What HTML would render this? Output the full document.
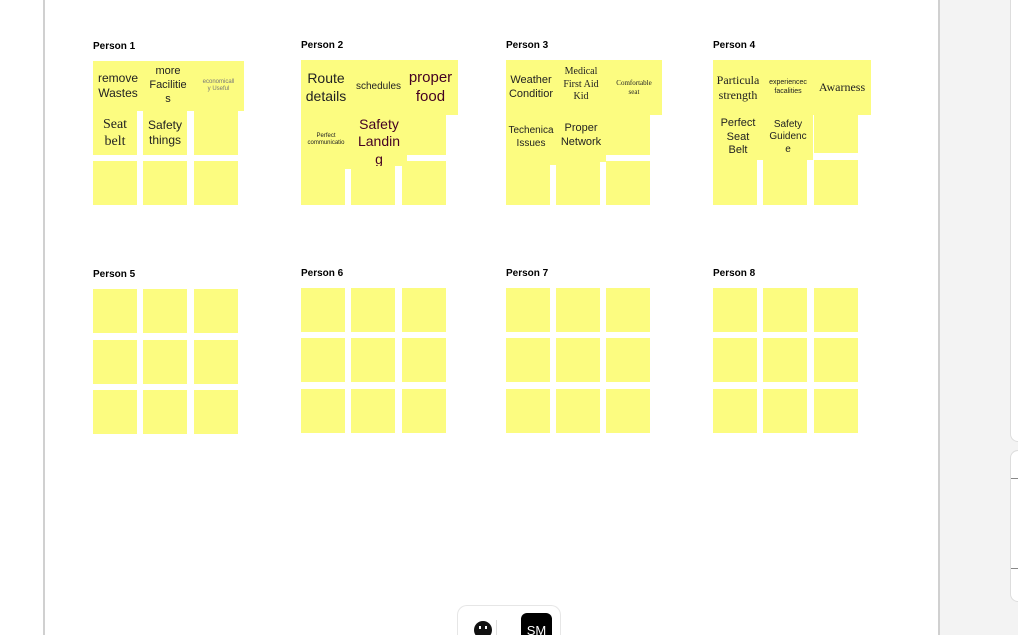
<!DOCTYPE html>
<html style="overflow:hidden;height:635px"><head><meta charset="utf-8"><style>
html,body{margin:0;width:1018px;height:635px;overflow:hidden}
body{background:#fff;position:relative;font-family:"Liberation Sans",sans-serif}
.n{position:absolute;background:#fcfc80;display:flex;align-items:center;justify-content:center;text-align:center;color:#222;line-height:1.25;overflow:hidden;box-sizing:border-box;white-space:nowrap}
.t{position:absolute;font-weight:bold;font-size:10px;color:#000}
.s{font-family:"Liberation Serif",serif}
</style></head><body>
<div style="position:absolute;left:43px;top:0;width:2px;height:635px;background:#d0d0d0"></div>
<div style="position:absolute;left:938px;top:0;width:80px;height:635px;background:#f3f3f3;border-left:2px solid #d0d0d0"></div>
<div style="position:absolute;left:1010px;top:-10px;width:20px;height:450px;background:#fff;border:1px solid #ddd;border-radius:8px"></div>
<div style="position:absolute;left:1010px;top:450px;width:20px;height:150px;background:#fff;border:1px solid #ddd;border-radius:8px"></div>
<div style="position:absolute;left:1011px;top:478px;width:8px;height:1px;background:#888"></div>
<div style="position:absolute;left:1011px;top:568px;width:8px;height:1px;background:#888"></div>

<div class="t" style="left:93px;top:41px">Person 1</div>
<div class="t" style="left:301px;top:40px">Person 2</div>
<div class="t" style="left:506px;top:40px">Person 3</div>
<div class="t" style="left:713px;top:40px">Person 4</div>
<div class="t" style="left:93px;top:269px">Person 5</div>
<div class="t" style="left:301px;top:268px">Person 6</div>
<div class="t" style="left:506px;top:268px">Person 7</div>
<div class="t" style="left:713px;top:268px">Person 8</div>

<!-- Person 1 -->
<div class="n" style="left:93px;top:61px;width:50px;height:50px;font-size:12px">remove<br>Wastes</div>
<div class="n" style="left:143px;top:61px;width:50px;height:50px;font-size:11px">more<br>Facilitie<br>s</div>
<div class="n" style="left:193px;top:61px;width:51px;height:50px;font-size:6px;color:#777">economicall<br>y Useful</div>
<div class="n s" style="left:93px;top:111px;width:44px;height:44px;font-size:14px">Seat<br>belt</div>
<div class="n" style="left:143px;top:111px;width:44px;height:44px;font-size:12px">Safety<br>things</div>
<div class="n" style="left:194px;top:111px;width:44px;height:44px"></div>
<div class="n" style="left:93px;top:161px;width:44px;height:44px"></div>
<div class="n" style="left:143px;top:161px;width:44px;height:44px"></div>
<div class="n" style="left:194px;top:161px;width:44px;height:44px"></div>

<!-- Person 2 -->
<div class="n" style="left:301px;top:60px;width:50px;height:55px;font-size:14px">Route<br>details</div>
<div class="n" style="left:351px;top:60px;width:55px;height:55px;font-size:10px">schedules</div>
<div class="n" style="left:403px;top:60px;width:55px;height:55px;font-size:15px;color:#402">proper<br>food</div>
<div class="n" style="left:301px;top:111px;width:50px;height:58px;font-size:6px">Perfect<br>communicatio</div>
<div class="n" style="left:402px;top:111px;width:44px;height:44px"></div>
<div class="n" style="left:351px;top:110px;width:56px;height:56px;font-size:14px;color:#402;padding-top:8px">Safety<br>Landin<br>g</div>
<div class="n" style="left:301px;top:161px;width:44px;height:44px"></div>
<div class="n" style="left:351px;top:166px;width:44px;height:39px"></div>
<div class="n" style="left:402px;top:161px;width:44px;height:44px"></div>

<!-- Person 3 -->
<div class="n" style="left:506px;top:60px;width:50px;height:55px;font-size:11px">Weather<br>Conditior</div>
<div class="n s" style="left:556px;top:60px;width:50px;height:50px;font-size:10px">Medical<br>First Aid<br>Kid</div>
<div class="n s" style="left:606px;top:60px;width:56px;height:55px;font-size:7px">Comfortable<br>seat</div>
<div class="n" style="left:506px;top:110px;width:50px;height:55px;font-size:10px">Techenica<br>Issues</div>
<div class="n" style="left:556px;top:110px;width:50px;height:52px;font-size:11px">Proper<br>Network</div>
<div class="n" style="left:606px;top:115px;width:44px;height:40px"></div>
<div class="n" style="left:506px;top:165px;width:44px;height:40px"></div>
<div class="n" style="left:556px;top:162px;width:44px;height:43px"></div>
<div class="n" style="left:606px;top:161px;width:44px;height:44px"></div>

<!-- Person 4 -->
<div class="n s" style="left:713px;top:60px;width:50px;height:55px;font-size:12px">Particula<br>strength</div>
<div class="n" style="left:763px;top:60px;width:50px;height:55px;font-size:7px">experiencec<br>facalities</div>
<div class="n s" style="left:813px;top:60px;width:58px;height:55px;font-size:12px">Awarness</div>
<div class="n" style="left:713px;top:115px;width:50px;height:45px;font-size:11px">Perfect<br>Seat<br>Belt</div>
<div class="n" style="left:763px;top:115px;width:50px;height:45px;font-size:10px">Safety<br>Guidenc<br>e</div>
<div class="n" style="left:814px;top:115px;width:44px;height:38px"></div>
<div class="n" style="left:713px;top:160px;width:44px;height:45px"></div>
<div class="n" style="left:763px;top:160px;width:44px;height:45px"></div>
<div class="n" style="left:814px;top:160px;width:44px;height:45px"></div>

<!-- bottom grids -->
<div class="n" style="left:93px;top:289px;width:44px;height:44px"></div><div class="n" style="left:143px;top:289px;width:44px;height:44px"></div><div class="n" style="left:194px;top:289px;width:44px;height:44px"></div>
<div class="n" style="left:93px;top:340px;width:44px;height:44px"></div><div class="n" style="left:143px;top:340px;width:44px;height:44px"></div><div class="n" style="left:194px;top:340px;width:44px;height:44px"></div>
<div class="n" style="left:93px;top:390px;width:44px;height:44px"></div><div class="n" style="left:143px;top:390px;width:44px;height:44px"></div><div class="n" style="left:194px;top:390px;width:44px;height:44px"></div>

<div class="n" style="left:301px;top:288px;width:44px;height:44px"></div><div class="n" style="left:351px;top:288px;width:44px;height:44px"></div><div class="n" style="left:402px;top:288px;width:44px;height:44px"></div>
<div class="n" style="left:301px;top:338px;width:44px;height:44px"></div><div class="n" style="left:351px;top:338px;width:44px;height:44px"></div><div class="n" style="left:402px;top:338px;width:44px;height:44px"></div>
<div class="n" style="left:301px;top:389px;width:44px;height:44px"></div><div class="n" style="left:351px;top:389px;width:44px;height:44px"></div><div class="n" style="left:402px;top:389px;width:44px;height:44px"></div>

<div class="n" style="left:506px;top:288px;width:44px;height:44px"></div><div class="n" style="left:556px;top:288px;width:44px;height:44px"></div><div class="n" style="left:606px;top:288px;width:44px;height:44px"></div>
<div class="n" style="left:506px;top:338px;width:44px;height:44px"></div><div class="n" style="left:556px;top:338px;width:44px;height:44px"></div><div class="n" style="left:606px;top:338px;width:44px;height:44px"></div>
<div class="n" style="left:506px;top:389px;width:44px;height:44px"></div><div class="n" style="left:556px;top:389px;width:44px;height:44px"></div><div class="n" style="left:606px;top:389px;width:44px;height:44px"></div>

<div class="n" style="left:713px;top:288px;width:44px;height:44px"></div><div class="n" style="left:763px;top:288px;width:44px;height:44px"></div><div class="n" style="left:814px;top:288px;width:44px;height:44px"></div>
<div class="n" style="left:713px;top:338px;width:44px;height:44px"></div><div class="n" style="left:763px;top:338px;width:44px;height:44px"></div><div class="n" style="left:814px;top:338px;width:44px;height:44px"></div>
<div class="n" style="left:713px;top:389px;width:44px;height:44px"></div><div class="n" style="left:763px;top:389px;width:44px;height:44px"></div><div class="n" style="left:814px;top:389px;width:44px;height:44px"></div>

<!-- bottom toolbar -->
<div style="position:absolute;left:457px;top:605px;width:104px;height:30px;border:1px solid #e6e6e6;border-bottom:none;border-radius:10px 10px 0 0;background:#fff;box-sizing:border-box"></div>
<div style="position:absolute;left:474px;top:621px;width:18px;height:14px;overflow:hidden">
  <div style="width:18px;height:18px;border-radius:50%;background:#111;position:relative">
    <div style="position:absolute;left:5px;top:5px;width:2px;height:3px;background:#fff"></div>
    <div style="position:absolute;left:11px;top:5px;width:2px;height:3px;background:#fff"></div>
  </div>
</div>
<div style="position:absolute;left:496px;top:620px;width:1px;height:15px;background:#ddd"></div>
<div style="position:absolute;left:521px;top:613px;width:31px;height:22px;border-radius:6px 6px 0 0;background:#000;color:#fff;font-size:13px;text-align:center;line-height:30px;padding-top:3px;box-sizing:border-box;overflow:hidden">SM</div>
</body></html>
